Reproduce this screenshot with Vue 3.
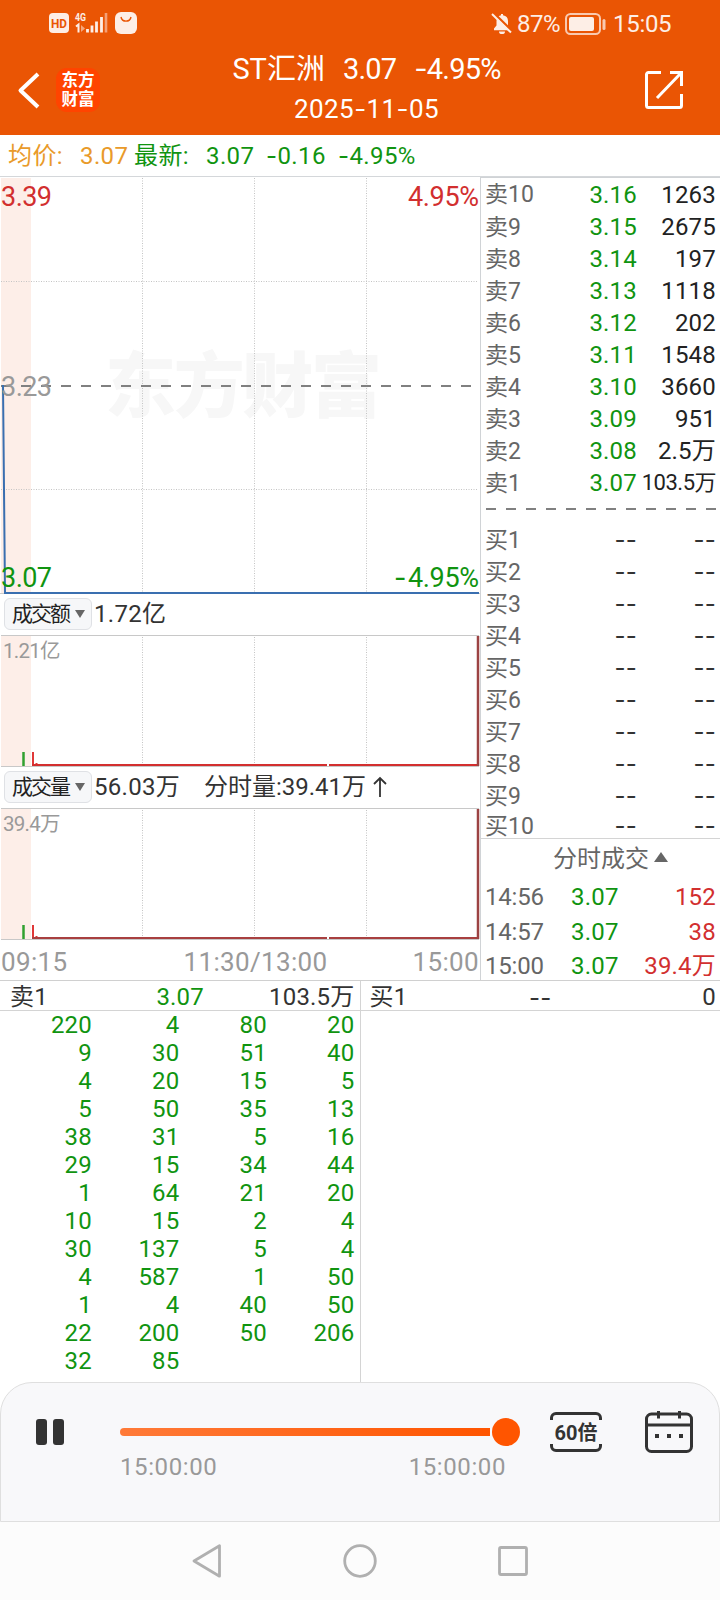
<script setup>
import { h } from 'vue'

// Renders a string with its minus signs set in a wider face.
const Num = (props) =>
  h('span', { class: 'num' }, String(props.t).split(/(-+)/).map((s) => (s[0] === '-' ? h('span', { class: 'dash' }, s) : s)))
Num.props = ['t']

const asks = [
  ['卖10', '3.16', '1263'], ['卖9', '3.15', '2675'], ['卖8', '3.14', '197'], ['卖7', '3.13', '1118'],
  ['卖6', '3.12', '202'], ['卖5', '3.11', '1548'], ['卖4', '3.10', '3660'], ['卖3', '3.09', '951'],
  ['卖2', '3.08', '2.5万'], ['卖1', '3.07', '103.5万'],
]
const bids = Array.from({ length: 10 }, (_, i) => '买' + (i + 1))
const deals = [['14:56', '152'], ['14:57', '38'], ['15:00', '39.4万']]
const queue = [
  220, 4, 80, 20, 9, 30, 51, 40, 4, 20, 15, 5, 5, 50, 35, 13, 38, 31, 5, 16, 29, 15, 34, 44,
  1, 64, 21, 20, 10, 15, 2, 4, 30, 137, 5, 4, 4, 587, 1, 50, 1, 4, 40, 50, 22, 200, 50, 206, 32, 85,
]
const gridX = [142.5, 254.5, 366.5]
</script>

<template>
  <div class="screen">
    <header class="top">
      <div class="status">
        <svg class="st-left" width="100" height="30" viewBox="0 0 100 30">
          <rect x="1" y="5" width="20" height="20" rx="4" fill="#fdeee6" />
          <text x="11" y="19.5" text-anchor="middle" font-size="13" font-weight="700" fill="#ea5504" textLength="16" lengthAdjust="spacingAndGlyphs">HD</text>
          <text x="27" y="12.5" font-size="11" font-weight="700" fill="#fdeee6" textLength="11" lengthAdjust="spacingAndGlyphs">4G</text>
          <path d="M28 18.5l2.5-2v8" fill="none" stroke="#fdeee6" stroke-width="2" />
          <path d="M33 17l4 3.500-4 3.500z" fill="#f4a77e" />
          <path d="M39.500 21v3.500M44 17.500v7M48.500 13.500v11M53.500 9v15.500" stroke="#fdeee6" stroke-width="2.800" />
          <path d="M58 5v19.500" stroke="#f4a077" stroke-width="2.600" />
          <rect x="67" y="4" width="22" height="22" rx="6" fill="#fdeee6" />
          <path d="M73 9c1 5.500 9 5.500 10 0" fill="none" stroke="#ea5504" stroke-width="1.400" />
        </svg>
        <div class="st-right">
          <svg width="22" height="24" viewBox="0 0 22 24">
            <path d="M3 16.500l2.500-3V9a6 6 0 0 1 4.500-5.800V2h2v1.200A6 6 0 0 1 17 9v5l2.500 3v1.200H3z M8 19.500h6a3 2.600 0 0 1-6 0z" fill="#fdeee6" />
            <path d="M2.500 1L21.500 19.500" stroke="#ea5504" stroke-width="2.500" />
            <path d="M1 2L20 20.500" stroke="#fdeee6" stroke-width="2" />
          </svg>
          <span class="pct">87%</span>
          <svg class="bat" width="42" height="24" viewBox="0 0 42 24">
            <rect x="1" y="2" width="34" height="20" rx="4.500" fill="none" stroke="#f9c9b0" stroke-width="2" />
            <rect x="4" y="5" width="25" height="14" rx="2" fill="#fdeee6" />
            <rect x="37.500" y="7" width="3" height="11" rx="1.500" fill="#f9c9b0" />
          </svg>
          <span class="clock">15:05</span>
        </div>
      </div>
      <div class="bar">
        <svg class="back" width="24" height="40" viewBox="0 0 24 40">
          <path d="M22 4L4.500 20.500L22 37" fill="none" stroke="#fff" stroke-width="4" stroke-linejoin="round" />
        </svg>
        <div class="logo"><span>东方</span><span>财富</span></div>
        <div class="title">
          <div class="name"><Num t="ST汇洲" /><Num class="tight" t="3.07" /><Num class="tight" t="-4.95%" /></div>
          <div class="date"><Num t="2025-11-05" /></div>
        </div>
        <svg class="share" width="40" height="40" viewBox="0 0 40 40">
          <path d="M17 2.500H4.500a2 2 0 0 0-2 2v31a2 2 0 0 0 2 2h31a2 2 0 0 0 2-2V24M26 2.500H37.500V16M37 3L13 28" fill="none" stroke="#fff" stroke-width="3" />
        </svg>
      </div>
    </header>

    <div class="quote">
      <span class="avg">均价:</span><span class="avg v1">3.07</span>
      <span class="g l2">最新:</span><Num class="g v2" t="3.07" /><Num class="g v3" t="-0.16" /><Num class="g v4" t="-4.95%" />
    </div>

    <main class="main">
      <section class="charts">
        <svg class="price" width="480" height="418" viewBox="0 0 480 418">
          <text class="mark" x="105" y="234" textLength="277">东方财富</text>
          <rect x="1" y="1" width="30" height="415" fill="#fdeee8" />
          <g stroke="#c4c4c4" stroke-dasharray="1 1.500">
            <path v-for="x in gridX" :key="x" :d="`M${x} 1V416`" />
            <path d="M1 104.500H478M1 312.500H478" />
          </g>
          <path d="M0 416.500H480" stroke="#ccc" />
          <path d="M1 209H474" stroke="#808080" stroke-width="2" stroke-dasharray="10 10" />
          <path d="M3 208L5 416H479" fill="none" stroke="#3a6fb0" stroke-width="2" />
          <g font-size="27">
            <text x="1" y="29" fill="#d22f2f" textLength="51">3.39</text>
            <text x="479" y="29" fill="#d22f2f" text-anchor="end" textLength="71">4.95%</text>
            <text x="1" y="219" fill="#999" textLength="51">3.23</text>
            <text x="1" y="410" fill="#109410" textLength="51">3.07</text>
            <text x="479" y="410" fill="#109410" text-anchor="end" textLength="71">4.95%</text>
            <text class="minus" x="394" y="410" fill="#109410">-</text>
          </g>
        </svg>

        <div class="tool">
          <button class="pick">成交额<i></i></button><span class="t1">1.72亿</span>
        </div>
        <svg class="vol" width="480" height="132" viewBox="0 0 480 132">
          <rect x="1" y="1" width="30" height="130" fill="#fdeee8" />
          <path v-for="x in gridX" :key="x" :d="`M${x} 2V131`" stroke="#c4c4c4" stroke-dasharray="1 1.500" />
          <path d="M1 .5H479M1 131.500H479" stroke="#c8c8c8" />
          <path d="M23.500 117V131" stroke="#30a030" stroke-width="2.500" />
          <path d="M33 117V131M36.500 128V131" stroke="#e03838" stroke-width="2" />
          <path d="M32 130H327M329 130H477" stroke="#d32f2f" stroke-width="2" />
          <path d="M478 1V131" stroke="#9c4343" stroke-width="2.500" />
          <text x="3" y="22.500" font-size="20.500" fill="#999" textLength="57.500">1.21亿</text>
        </svg>

        <div class="tool">
          <button class="pick">成交量<i></i></button><span class="t2">56.03万</span><span class="t3">分时量:39.41万<svg width="16" height="24" viewBox="0 0 16 24"><path d="M8 22V3M2 9L8 3L14 9" fill="none" stroke="#333" stroke-width="1.800" /></svg></span>
        </div>
        <svg class="vol" width="480" height="132" viewBox="0 0 480 132">
          <rect x="1" y="1" width="30" height="130" fill="#fdeee8" />
          <path v-for="x in gridX" :key="x" :d="`M${x} 2V131`" stroke="#c4c4c4" stroke-dasharray="1 1.500" />
          <path d="M1 .5H479M1 131.500H479" stroke="#c8c8c8" />
          <path d="M23.500 117V131" stroke="#30a030" stroke-width="2.500" />
          <path d="M33 117V131M36.500 128V131" stroke="#e03838" stroke-width="2" />
          <path d="M32 130H327M329 130H477" stroke="#a84040" stroke-width="2" />
          <path d="M478 1V131" stroke="#9c4343" stroke-width="2.500" />
          <text x="3" y="22.500" font-size="20.500" fill="#999" textLength="57.500">39.4万</text>
        </svg>
        <div class="times"><span>09:15</span><span class="noon">11:30/13:00</span><span>15:00</span></div>
      </section>

      <aside class="book">
        <div class="asks">
          <div v-for="r in asks" :key="r[0]" class="row">
            <span class="lab">{{ r[0] }}</span><span class="px">{{ r[1] }}</span><span class="qty" :class="{ long: r[2].length > 5 }">{{ r[2] }}</span>
          </div>
        </div>
        <svg class="cut" width="239" height="4" viewBox="0 0 239 4"><path d="M5 2H239" stroke="#808080" stroke-width="2" stroke-dasharray="10 10" /></svg>
        <div class="bids">
          <div v-for="b in bids" :key="b" class="row">
            <span class="lab">{{ b }}</span><Num class="px none" t="--" /><Num class="qty none" t="--" />
          </div>
        </div>
        <div class="deals">
          <div class="dhead">分时成交<i></i></div>
          <div v-for="d in deals" :key="d[0]" class="drow">
            <span class="dt">{{ d[0] }}</span><span class="dp">3.07</span><span class="dq">{{ d[1] }}</span>
          </div>
        </div>
      </aside>
    </main>

    <section class="queues">
      <div class="side left">
        <div class="qhead"><span class="ql">卖1</span><span class="g qp">3.07</span><span class="qq">103.5万</span></div>
        <div class="qgrid"><span v-for="(n, i) in queue" :key="i">{{ n }}</span></div>
      </div>
      <div class="side">
        <div class="qhead"><span class="ql">买1</span><Num class="qp none" t="--" /><span class="qq">0</span></div>
      </div>
    </section>

    <footer class="player">
      <svg class="pause" width="30" height="28" viewBox="0 0 30 28">
        <rect x="1" y="1" width="11" height="26" rx="3" fill="#333" /><rect x="18" y="1" width="11" height="26" rx="3" fill="#333" />
      </svg>
      <div class="seek">
        <div class="track"><div class="fill"></div><div class="knob"></div></div>
        <div class="span"><span>15:00:00</span><span>15:00:00</span></div>
      </div>
      <svg class="speed" width="54" height="42" viewBox="0 0 54 42">
        <path d="M2.500 9V7a4.500 4.500 0 0 1 4.500-4.500H47A4.500 4.500 0 0 1 51.500 7V9M2.500 33v2a4.500 4.500 0 0 0 4.500 4.500H47a4.500 4.500 0 0 0 4.500-4.500V33" fill="none" stroke="#333" stroke-width="3" />
        <text x="5.500" y="29" font-size="20" font-weight="700" fill="#333" textLength="43">60倍</text>
      </svg>
      <svg class="cal" width="50" height="44" viewBox="0 0 50 44">
        <rect x="2.500" y="4" width="45" height="37.500" rx="5" fill="none" stroke="#333" stroke-width="3" />
        <path d="M2 15H48M14.500 1V8.500M35.500 1V8.500" stroke="#333" stroke-width="3" />
        <path d="M11 26h4M23 26h4M35 26h4" stroke="#333" stroke-width="4" />
      </svg>
    </footer>

    <nav class="nav">
      <svg width="30" height="34" viewBox="0 0 30 34"><path d="M27.500 1.800V32.200L2 17Z" fill="none" stroke="#b0b0b0" stroke-width="2.800" stroke-linejoin="round" /></svg>
      <svg width="34" height="34" viewBox="0 0 34 34"><circle cx="17" cy="17" r="15.300" fill="none" stroke="#b0b0b0" stroke-width="2.800" /></svg>
      <svg width="30" height="30" viewBox="0 0 30 30"><rect x="1.500" y="1.500" width="27" height="27" rx="1.500" fill="none" stroke="#b0b0b0" stroke-width="2.800" /></svg>
    </nav>
  </div>
</template>

<style>
html, body { background: #fff; }
.num { white-space: pre; }
.dash { font-family: Inter, sans-serif; font-weight: 400; }
</style>

<style scoped>
.screen { width: 720px; height: 1600px; overflow: hidden; display: flex; flex-direction: column; background: #fff; color: #333; font-family: Roboto, "Noto Sans CJK SC", sans-serif; font-size: 24px; }
.screen * { box-sizing: border-box; }
svg { display: block; flex: none; }
.g { color: #109410; }

.top { height: 135px; flex: none; background: #ea5504; color: #fff; }
.status { height: 46px; display: flex; justify-content: space-between; padding: 8px 49px 0 48px; color: #fdeee6; }
.st-right { display: flex; height: 31px; align-items: center; }
.pct { margin-left: 4px; width: 45px; font-size: 24px; letter-spacing: -.5px; }
.bat { margin-left: 3px; }
.clock { margin-left: 6px; width: 58px; letter-spacing: -.3px; }
.bar { height: 89px; display: flex; }
.back { margin: 24px 0 0 16px; }
.logo { margin: 22px 0 0 16px; width: 44px; height: 44px; border-radius: 11px; background: #ff4400; font-weight: 700; font-size: 16.500px; line-height: 19px; padding-top: 3px; display: flex; flex-direction: column; align-items: center; }
.title { flex: 1; display: flex; flex-direction: column; align-items: center; margin-right: 11px; }
.name { display: flex; gap: 18px; font-size: 29px; line-height: 46px; white-space: pre; }
.tight { letter-spacing: -.8px; }
.date { font-size: 26px; line-height: 36px; margin-top: -1px; letter-spacing: .4px; }
.share { margin: 24px 36px 0 0; }

.quote { height: 42px; flex: none; display: flex; align-items: center; padding-left: 8px; line-height: 42px; border-bottom: 1px solid #d4d7da; letter-spacing: .4px; }
.avg { color: #e99a2a; width: 72px; }
.avg.v1 { width: 54px; }
.l2 { width: 72px; }
.v2 { width: 60px; }
.v3 { width: 72px; }

.main { display: flex; height: 804px; flex: none; border-bottom: 1px solid #d0d0d0; }
.charts { width: 480px; }
.price { margin-bottom: -1px; }
.tool { height: 41px; display: flex; align-items: center; white-space: pre; padding: 0 0 1px 4px; }
.tool span { line-height: 32px; }
.tool .t1, .tool .t2 { letter-spacing: .3px; }
.pick { width: 88px; height: 32px; border: 1px solid #dfe1e5; border-radius: 6px; background: #f6f7f9; padding: 0 0 0 7px; margin: 0 2px 0 0; display: flex; align-items: center; font: 21px/30px Roboto, "Noto Sans CJK SC", sans-serif; color: #222; letter-spacing: -2px; }
.pick i { border: 5px solid transparent; border-top: 8px solid #666; border-bottom: 0; margin-left: 6px; }
.t2 { width: 110px; }
.t3 { display: flex; align-items: center; }
.t3 svg { margin-left: 6px; }
.times { display: flex; justify-content: space-between; padding: 1px 1px 0; color: #999; font-size: 26px; line-height: 42px; letter-spacing: .35px; }
.noon { margin-left: 31px; }
text { font-family: Roboto, "Noto Sans CJK SC", sans-serif; }
.mark { font-size: 71px; font-weight: 900; fill: #f7f7f7; }
.minus { font-family: Inter, sans-serif; font-size: 27px; font-weight: 400; }

.book { width: 240px; border-left: 1px solid #d0d3d6; border-top: 1px solid #d0d3d6; letter-spacing: .2px; }
.asks { padding-top: 1px; }
.row { display: flex; height: 32px; line-height: 32px; white-space: pre; padding-right: 4px; }
.asks .row:first-child .lab { line-height: 31px; }
.lab { width: 65px; padding-left: 4px; color: #666; font-size: 23px; letter-spacing: 0; line-height: 33px; }
.px { width: 91px; text-align: right; color: #109410; }
.qty { flex: 1; text-align: right; color: #222; }
.qty.long { font-size: 22px; letter-spacing: -.5px; margin-left: -10px; }
.none { color: #333; }
.cut { margin-top: 8px; }
.bids { padding-top: 13px; height: 327px; }
.bids .row:last-child { height: 28px; line-height: 28px; }
.bids .row:last-child .lab { line-height: 29px; }
.deals { border-top: 1px solid #d4d4d4; }
.dhead { height: 41px; line-height: 41px; padding-left: 72px; display: flex; align-items: center; color: #666; letter-spacing: 0; }
.dhead i { border: 7px solid transparent; border-bottom: 10px solid #666; border-top: 0; margin: -5px 0 0 5px; }
.drow { height: 34.500px; line-height: 34.500px; display: flex; padding: 0 4px 0 4px; }
.dt { width: 86px; color: #666; font-size: 24px; letter-spacing: -.2px; }
.dp { color: #109410; }
.dq { flex: 1; text-align: right; color: #d22f2f; }

.queues { display: flex; height: 401px; flex: none; letter-spacing: .2px; }
.side { width: 360px; }
.left { border-right: 1px solid #d4d4d4; width: 361px; }
.qhead { height: 30px; line-height: 33px; border-bottom: 1px solid #d4d4d4; display: flex; padding: 0 5px 0 10px; }
.ql { width: 61px; }
.qp { width: 133px; text-align: right; }
.side:not(.left) .qp { width: 121px; }
.side:not(.left) .qhead { padding: 0 4px 0 9px; }
.qq { flex: 1; text-align: right; }
.qgrid { display: grid; grid-template-columns: 92px repeat(3, 87.500px); color: #109410; text-align: right; line-height: 28px; }

.player { height: 140px; flex: none; border: 1px solid #dfdfdf; border-radius: 32px 32px 0 0; background: #f8f8fa; display: flex; }
.pause { margin: 35px 0 0 34px; }
.seek { margin: 35px 0 0 55px; width: 400px; }
.track { display: flex; align-items: center; height: 28px; }
.fill { width: 370px; height: 8px; border-radius: 4px 0 0 4px; background: linear-gradient(90deg, #ff7a38, #ff5500); }
.knob { width: 28px; height: 28px; border-radius: 50%; background: #ff5500; margin-left: 2px; }
.span { display: flex; justify-content: space-between; width: 386px; color: #999; line-height: 42px; letter-spacing: .6px; }
.speed { margin: 28px 0 0 29px; }
.cal { margin: 27px 0 0 41px; }
.nav { flex: 1; background: #fcfcfc; display: flex; justify-content: center; align-items: center; gap: 121px; padding-right: 1px; }
</style>
